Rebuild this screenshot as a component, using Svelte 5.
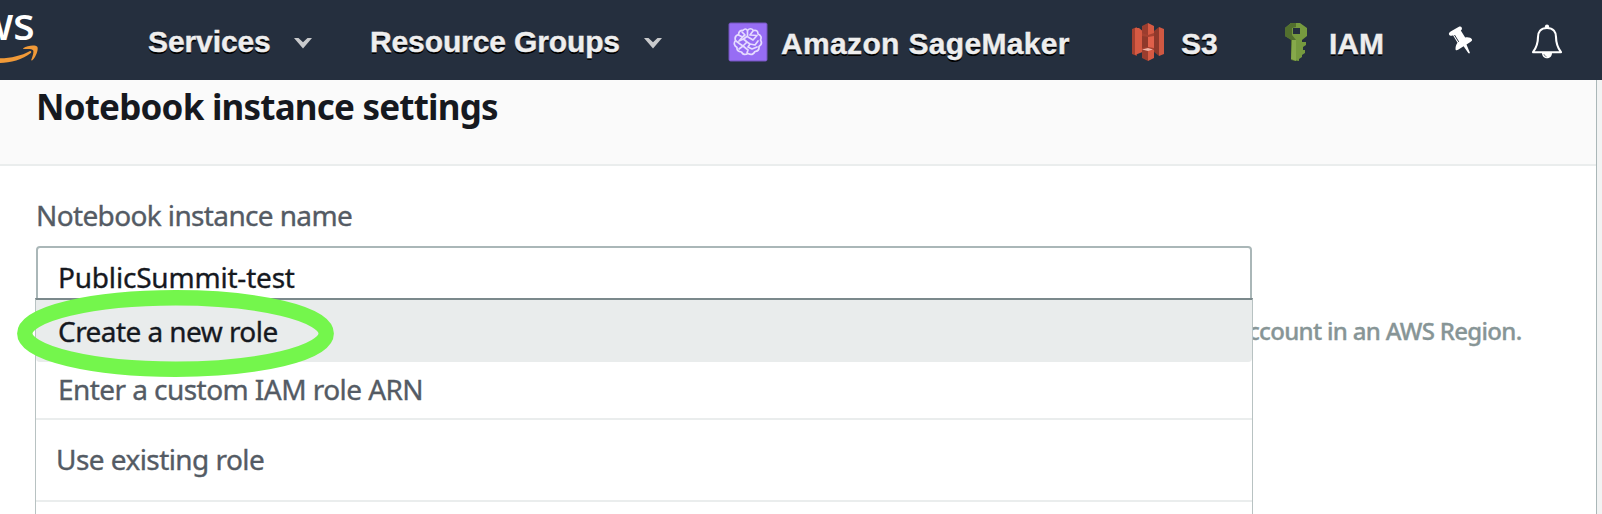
<script>
  const options = ['Create a new role', 'Enter a custom IAM role ARN', 'Use existing role'];
</script>

{#snippet caret()}
  <svg class="caret" width="18" height="11" viewBox="0 0 18 11"><path d="M0 0H4.5L9 4.3L13.5 0H18L9 10.5Z" fill="#c9cacc" /></svg>
{/snippet}

<div class="page">
  <nav>
    <div class="logo">
      <span class="logo-text">aws</span>
      <svg class="smile" width="40" height="20" viewBox="0 0 40 20">
        <path d="M0 13.2C11 13.2 22 10.5 29.5 6.2C31 5.5 32 7 30.8 8C23 14.5 10 18 0 18Z" fill="#f19a38" />
        <path d="M23.2 3.2C27.5.2 35.6-.5 37.3 1.7C38.8 4.3 35.8 12.5 32.3 15.3C31.7 15.8 31 15.4 31.3 14.7C32.3 12 34 7.2 33.2 5.4C32.2 3.6 27 4 24 4.1C23 4.2 22.7 3.6 23.2 3.2Z" fill="#f19a38" />
      </svg>
    </div>
    <a class="item services"><span>Services</span>{@render caret()}</a>
    <a class="item groups"><span>Resource Groups</span>{@render caret()}</a>
    <a class="item low sage">
      <svg width="40" height="40" viewBox="0 0 40 40">
        <rect x="1" y="1" width="38" height="38" rx="1.5" fill="#976df4" stroke="#7555bd" stroke-width="1" />
        <g fill="none" stroke="#e6dcff" stroke-width="1.7" stroke-linejoin="round" stroke-linecap="round">
          <path d="M19.500 8.500Q22.500 5 25.500 8.500Q30 7.500 30 12Q34.500 14 32.500 18Q35 22 31 24.500Q31.500 29 27 29.500Q24.500 34 20 31.500Q15.500 34 13.500 30Q8.500 29.500 9 25.500Q4.500 22.500 7.500 18.500Q6 14 10.500 12.500Q11 8 15 8.500Q17.500 5.500 19.500 8.500Z" />
          <path d="M19.500 9V14L15.500 17L19 20L15 24L20 28L19 31M10.500 13L14.500 15L11 19L15.500 17M8 19L12 22L15 24L11 27M14 10L17 13L14.500 15M25 9L22 13L29 13.500L25 18L20 15M30 19L27 23L22 22L20 25L24 27L29 25M19 20L22 22" />
        </g>
      </svg>
      <span>Amazon SageMaker</span>
    </a>
    <a class="item low s3">
      <svg width="34" height="40" viewBox="0 0 34 40">
        <path d="M1 7L6 5V34L1 32Z" fill="#a54130" /><path d="M33 7L28 5V34L33 32Z" fill="#cf5842" />
        <path d="M28 5L23 9V30L28 34Z" fill="#8f392b" />
        <path d="M4 6H8L14 11V29L4 33Z" fill="#d65a43" />
        <path d="M11 10H23V30H11Z" fill="#a54130" />
        <path d="M17 1L11 4V11L17 13Z" fill="#9b3d2e" /><path d="M17 1L23 4V11L17 13Z" fill="#d65a43" />
        <path d="M11 14L17 15V25L11 26Z" fill="#8f392b" /><path d="M17 15L23 14V26L17 25Z" fill="#e0604a" />
        <path d="M11 28L17 27V39L11 36Z" fill="#9b3d2e" /><path d="M17 27L23 28V36L17 39Z" fill="#d65a43" />
        <path d="M11 27.500L17 26L22 27.500L17 29Z" fill="#efb3a6" />
      </svg>
      <span>S3</span>
    </a>
    <a class="item low iam">
      <svg width="24" height="40" viewBox="0 0 24 40">
        <path d="M7 1H16L23 6V14L18 18V20H22V23L19 25V28H21V31L18 33V35L15 37V39L8 38V18L1 14V6Z" fill="#769a3f" />
        <path d="M7 1L1 6V14L7 18V38L12 39V18L8 13V6L12 5V1Z" fill="#526f2e" />
        <path d="M8 18H12V39L7 37Z" fill="#86a94b" />
        <path d="M9 6H16V12H9Z" fill="#252f3e" />
      </svg>
      <span>IAM</span>
    </a>
    <svg class="pin" width="26" height="30" viewBox="0 0 26 30">
      <path d="M1 8.500C.5 7.200 1.500 6.300 3 5.300L10.500 1C12 .3 13.200.5 13.700 1.500C14.300 2.700 13.800 3.800 12.800 4.600L17.200 11.500C20 10.800 23.300 11.800 24 13.500C24.300 14.500 23.500 15.400 22 16.300L18.500 18.500L21.800 26.500C22 27.500 20.800 27.700 20.300 27L15.600 20.200L10.500 23.500C8.500 24.700 7.500 24.500 7.500 22.700C7.500 20.500 8.300 18.300 9.500 16.800L5 9.300C3.500 10.200 1.600 10 1 8.500Z" fill="#fff" />
      <path d="M6.500 9L10.700 15.800" stroke="#252f3e" stroke-width="1" />
    </svg>
    <svg class="bell" width="32" height="36" viewBox="0 0 32 36">
      <path d="M16 4C9.500 4 7 8 7 13C7 20 5.500 23.500 2 28.200H30C26.500 23.500 25 20 25 13C25 8 22.500 4 16 4Z" fill="none" stroke="#fff" stroke-width="2.100" stroke-linejoin="round" />
      <circle cx="16" cy="2.600" r="2.100" fill="#fff" />
      <path d="M11 29H21C21 36 11 36 11 29Z" fill="#fff" /><path d="M12.800 30Q13.300 32.200 15.500 32.700" fill="none" stroke="#252f3e" stroke-width=".6" />
    </svg>
  </nav>
  <main>
    <section class="panel">
      <header><h1>Notebook instance settings</h1></header>
      <div class="body">
        <div class="label">Notebook instance name</div>
        <div class="input">PublicSummit-test</div>
        <div class="hint">ccount in an AWS Region.</div>
      </div>
      <div class="menu">
        {#each options as option, i}
          <div class="option o{i}">{option}</div>
        {/each}
      </div>
      <svg class="ring" width="320" height="90" viewBox="0 0 320 90"><ellipse cx="159.500" cy="44.500" rx="150.700" ry="35.700" fill="none" stroke="#74f64c" stroke-width="15.400" /></svg>
    </section>
  </main>
</div>

<style>
  :global(body) { overflow: hidden; }
  .page { width: 1602px; height: 514px; overflow: hidden; background: #f2f3f3; font-family: "Noto Sans", sans-serif; position: relative; }
  nav { height: 80px; background: #252f3e; display: flex; align-items: flex-start; position: relative; }
  .logo { width: 148px; flex: none; height: 80px; overflow: hidden; display: flex; flex-direction: column; }
  .logo-text { color: #fff; font: 500 45px/46px "Noto Sans", sans-serif; margin-left: -48px; letter-spacing: -.5px; }
  .smile { display: block; margin-top: -1px; }
  .item { flex: none; height: 80px; display: flex; align-items: flex-start; color: #eee; font: 700 30px/34px "Liberation Sans", Arial, sans-serif; white-space: nowrap; text-shadow: 0 2px 0 #000; -webkit-text-stroke: .4px #eee; }
  .item span { margin-top: 25px; }
  .item.low span { margin-top: 27px; }
  .item.low svg { margin-top: 22px; }
  .item svg { -webkit-text-stroke: 0; }
  .caret { margin: 38px 0 0 auto; }
  .services { width: 164px; margin-right: 58px; letter-spacing: -.1px; }
  .groups { width: 292px; margin-right: 66px; letter-spacing: -.12px; }
  .sage { width: 403px; gap: 13px; letter-spacing: .34px; }
  .s3 { width: 153px; gap: 16px; }
  .iam { width: 164px; gap: 21px; }
  .pin { flex: none; margin: 26px 0 0 0; }
  .bell { flex: none; margin: 24px 0 0 57px; }
  .panel { box-sizing: border-box; width: 1597px; height: 434px; background: #fff; border-right: 1px solid #aab7b8; position: relative; }
  header { height: 84px; background: #fafafa; border-bottom: 2px solid #eaeded; padding-left: 36px; overflow: hidden; }
  h1 { margin: 1px 0 0; font-size: 35px; line-height: 52px; font-weight: 700; letter-spacing: -.8px; color: #16191f; white-space: nowrap; }
  .body { padding: 29px 0 0 36px; width: 1216px; -webkit-text-stroke: .35px currentColor; }
  .label { font-size: 28px; line-height: 40px; height: 51px; letter-spacing: -.63px; color: #545b64; }
  .input { box-sizing: border-box; width: 1216px; height: 70px; border: 2px solid #aab7b8; border-radius: 4px; padding: 9px 0 0 20px; font-size: 28px; line-height: 40px; letter-spacing: -.2px; color: #16191f; }
  .hint { margin: -3px 0 0 1212px; font-size: 24px; line-height: 36px; font-weight: 500; letter-spacing: -.68px; color: #879596; white-space: nowrap; }
  .menu { box-sizing: border-box; position: absolute; left: 35px; top: 218px; width: 1218px; height: 216px; border: 1px solid #b8c2c2; border-top: 2px solid #7b898c; border-bottom: 0; background: #fff; color: #545b64; font-size: 28px; line-height: 40px; letter-spacing: -.56px; -webkit-text-stroke: .35px currentColor; }
  .option { box-sizing: border-box; padding-left: 22px; white-space: nowrap; }
  .o0 { height: 62px; background: #e9ecec; color: #16191f; padding-top: 11px; border-radius: 0 0 4px 4px; }
  .o1 { height: 58px; border-bottom: 2px solid #eaeded; padding-top: 7px; }
  .o2 { height: 82px; border-bottom: 2px solid #eaeded; padding: 19px 0 0 20px; }
  .ring { position: absolute; left: 16px; top: 209px; }
</style>
